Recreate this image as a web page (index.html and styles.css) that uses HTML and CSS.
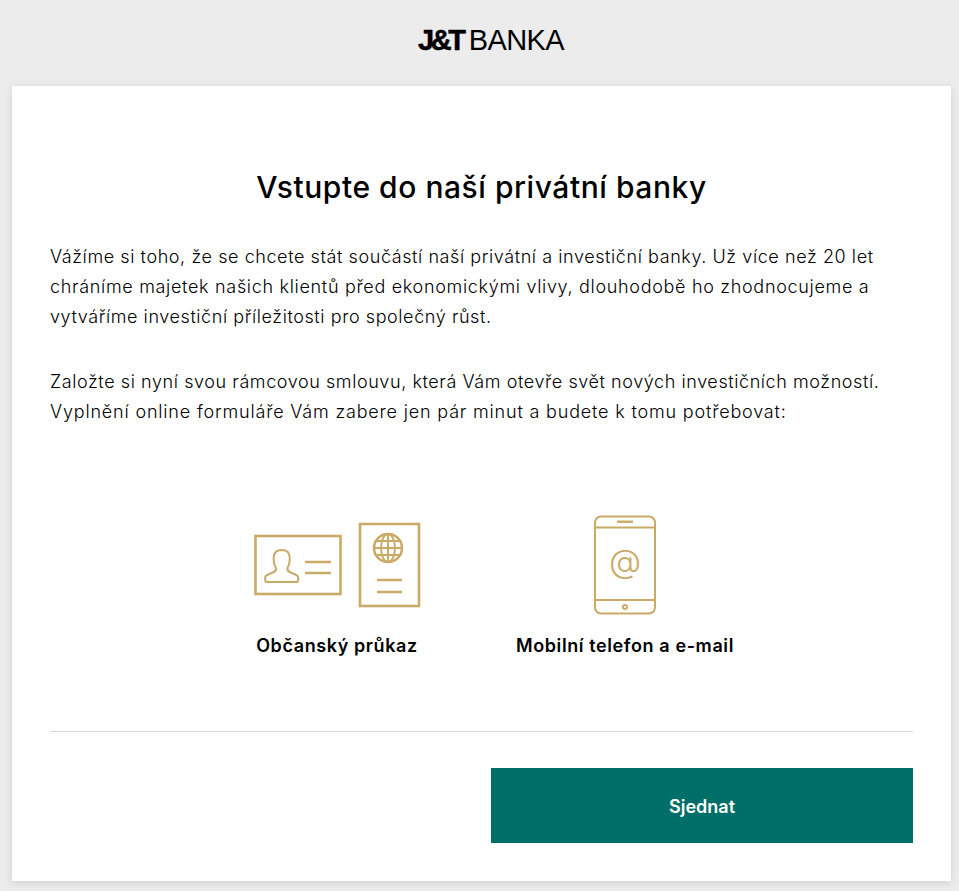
FILE: index.html
```html
<!DOCTYPE html>
<html lang="cs">
<head>
<meta charset="utf-8">
<title>J&amp;T Banka</title>
<link rel="stylesheet" href="styles.css">
</head>
<body>
<header class="top">
  <div class="logo"><span class="logo-jt">J&amp;T</span><span class="logo-banka">BANKA</span></div>
</header>
<main class="card">
  <h1 class="title">Vstupte do naší privátní banky</h1>
  <p class="para">Vážíme si toho, že se chcete stát součástí naší privátní a investiční banky. Už více než 20 let<br><span class="line-loose">chráníme majetek našich klientů před ekonomickými vlivy, dlouhodobě ho zhodnocujeme a</span><br>vytváříme investiční příležitosti pro společný růst.</p>
  <p class="para para-second">Založte si nyní svou rámcovou smlouvu, která Vám otevře svět nových investičních možností.<br><span class="line-wide">Vyplnění online formuláře Vám zabere jen pár minut a budete k tomu potřebovat:</span></p>
  <section class="needs">
    <div class="need need-id">
      <svg class="icon" width="168" height="100" viewBox="0 0 168 100" fill="none" stroke="#c9aa66" stroke-width="2.6">
        <rect x="2.500" y="21" width="85" height="58"/>
        <path stroke-width="2" d="M14 67H43.400c1.200 0 1.800-.8 1.800-2v-2c0-1.500-.8-2.500-2-3l-6.500-3c-2-1-2.800-2.500-2-4.500 1.700-2.500 2-5 2-8V43c0-5.500-3.500-8-8-8s-8 2.500-8 8v1.500c0 3 .5 5.500 2 8 .8 2 0 3.500-2 4.500l-6.500 3c-1.500.5-2 1.500-2 3v2c0 1.200.6 2 1.800 2z"/>
        <path d="M52 47h26M52 58h26"/>
        <rect x="107" y="9" width="59" height="82"/>
        <circle cx="135" cy="33" r="14"/>
        <ellipse cx="135" cy="33" rx="7" ry="14" stroke-width="2"/>
        <path stroke-width="2" d="M135 19v28M121 33h28M123 26h24M123 40h24"/>
        <path d="M124 65h25M124 77h25"/>
      </svg>
      <div class="need-label">Občanský průkaz</div>
    </div>
    <div class="need need-phone">
      <svg class="icon" width="64" height="100" viewBox="0 0 64 100" fill="none" stroke="#c9aa66" stroke-width="2">
        <rect x="2" y="1.500" width="60" height="97" rx="6"/>
        <path d="M2 12.500h60M2 85h60"/>
        <path stroke-width="2.400" d="M24 6.700h16"/>
        <circle cx="32" cy="92" r="2"/>
        <text class="at" x="32" y="58" text-anchor="middle">@</text>
      </svg>
      <div class="need-label">Mobilní telefon a e-mail</div>
    </div>
  </section>
  <hr class="rule">
  <div class="actions"><button class="submit" type="button">Sjednat</button></div>
</main>
</body>
</html>
```
FILE: styles.css
```css
* { box-sizing: border-box; }
html, body { margin: 0; padding: 0; }
body {
  background: #ececec;
  font-family: "Inter", "Noto Sans", sans-serif;
  color: #000;
  height: 891px;
  overflow: hidden;
}
.top {
  height: 86px;
  display: flex;
  justify-content: center;
  align-items: center;
  padding-bottom: 7px;
  padding-left: 23px;
}
.logo {
  display: flex;
  align-items: baseline;
  font-family: "Liberation Sans", sans-serif;
  font-size: 29px;
  line-height: 32px;
  color: #000;
}
.logo-jt { font-weight: 700; letter-spacing: -3.3px; -webkit-text-stroke: 0.5px #000; }
.logo-banka { margin-left: 6px; letter-spacing: -0.6px; }
.card {
  width: 939px;
  height: 795px;
  margin-left: 12px;
  padding: 80px 38px 0;
  background: #fff;
  box-shadow: 0 2px 8px rgba(0, 0, 0, 0.12);
}
.title {
  margin: 0;
  font-size: 30px;
  line-height: 42px;
  font-weight: 500;
  letter-spacing: 0.55px;
  text-align: center;
}
.para {
  margin: 34px 0 0;
  font-size: 18px;
  line-height: 30px;
  font-weight: 300;
  letter-spacing: 0.58px;
  white-space: nowrap;
}
.line-loose { letter-spacing: 0.68px; }
.line-wide { letter-spacing: 0.82px; }
.para-second { margin-top: 35px; }
.needs {
  display: flex;
  margin-top: 88px;
  padding-left: 203px;
}
.need { display: flex; flex-direction: column; align-items: center; }
.need-id { width: 168px; }
.need-phone { width: 222px; margin-left: 93px; }
.icon { display: block; }
.at { font-family: "Inter", sans-serif; font-weight: 300; font-size: 33px; fill: #c9aa66; stroke: none; }
.need-label {
  margin-top: 19px;
  font-size: 18px;
  line-height: 24px;
  font-weight: 600;
  letter-spacing: 0.6px;
  white-space: nowrap;
}
.rule {
  margin: 73px 0 0;
  border: 0;
  border-top: 1px solid #d9d9d9;
}
.actions { display: flex; justify-content: flex-end; margin-top: 36px; }
.submit {
  width: 422px;
  height: 75px;
  padding-top: 2px;
  border: 0;
  background: #006e68;
  color: #fff;
  font: 600 18px "Inter", sans-serif;
}
```
